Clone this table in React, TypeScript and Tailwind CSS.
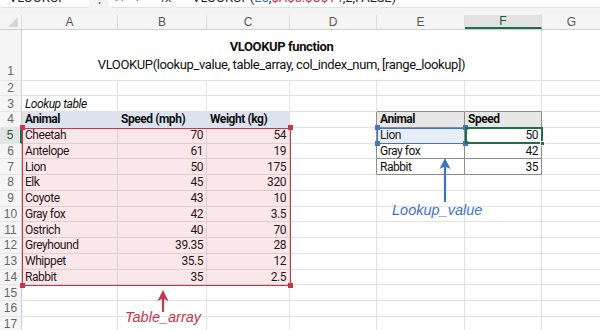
import React from 'react';

const animals: [string, string, string][] = [
  ['Cheetah', '70', '54'],
  ['Antelope', '61', '19'],
  ['Lion', '50', '175'],
  ['Elk', '45', '320'],
  ['Coyote', '43', '10'],
  ['Gray fox', '42', '3.5'],
  ['Ostrich', '40', '70'],
  ['Greyhound', '39.35', '28'],
  ['Whippet', '35.5', '12'],
  ['Rabbit', '35', '2.5'],
];

const lookup: Record<number, [string, string]> = {
  5: ['Lion', '50'],
  6: ['Gray fox', '42'],
  7: ['Rabbit', '35'],
};

// widths of row header, A..G
const widths = ['w-[22px]', 'w-[96px]', 'w-[89px]', 'w-[83px]', 'w-[87px]', 'w-[88px]', 'w-[77px]', 'w-[60px]'];

const FormulaBar = () => (
  <div className="h-[8px] overflow-hidden flex items-end bg-[#f3f3f3]">
    <div className="h-[22px] shrink-0 w-full flex items-end text-[13px] text-[#242424]">
      <div className="w-[89px] h-[20px] bg-white rounded-b-[3px] border-b border-[#e0e0e0] flex items-center justify-between pl-[9px] pr-[2px]">
        <span>VLOOKUP</span>
        <svg width="8" height="8" viewBox="0 0 8 8" className="text-[#555]">
          <path d="M1 2.5 L4 5.5 L7 2.5" fill="none" stroke="currentColor" strokeWidth="1.1" />
        </svg>
      </div>
      <div className="w-[20px] h-[20px] flex items-center justify-center text-[#666]">⋮</div>
      <div className="w-[62px] h-[20px] bg-white rounded-b-[3px] border-b border-[#e0e0e0] flex items-center gap-[9px] pl-[5px]">
        <span className="text-[#c4314b]">✕</span>
        <span className="text-[#107c41]">✓</span>
        <span className="italic text-[#444] ml-[7px]">fx</span>
      </div>
      <div className="flex-1 ml-[3px] h-[20px] bg-white rounded-bl-[3px] border-b border-[#e0e0e0] flex items-center pl-[11px]">
        <span>=VLOOKUP(</span>
        <span className="text-[#2f6fd6]">E5</span>
        <span>,</span>
        <span className="text-[#c4314b]">$A$5:$C$14</span>
        <span>,2,FALSE)</span>
      </div>
    </div>
  </div>
);

const ColumnHeader = () => (
  <div className="flex h-[15px] bg-[#f5f5f5] border-b border-[#cfcfcf] text-[12px] text-[#555] font-['Liberation_Sans',Roboto,sans-serif]">
    <div className={`${widths[0]} shrink-0 border-r border-[#dcdcdc] relative`}>
      <svg width="10" height="10" viewBox="0 0 10 10" className="absolute right-[3px] bottom-[2px]">
        <path d="M10 0 L10 10 L0 10 Z" fill="#d6d6d6" />
      </svg>
    </div>
    {['A', 'B', 'C', 'D', 'E', 'F', 'G'].map((c, i) => (
      <div
        key={c}
        className={`${widths[i + 1]} shrink-0 flex items-center justify-center border-r border-[#dcdcdc] ${
          c === 'F' ? 'bg-[#e3e3e3] border-b-2 border-b-[#1e7145] text-[#1e5a38]' : ''
        }`}
      >
        {c}
      </div>
    ))}
  </div>
);

const RowHeader = ({ n, tall }: { n: number; tall?: boolean }) => (
  <div
    className={`${widths[0]} shrink-0 flex justify-center text-[12px] font-['Liberation_Sans',Roboto,sans-serif] border-b border-[#e6e6e6] ${
      tall ? 'items-end' : 'items-center'
    } ${n === 5 ? 'bg-[#e3e3e3] border-r-2 border-r-[#1e7145] text-[#1e5a38]' : 'bg-[#f5f5f5] border-r border-r-[#cfcfcf] text-[#666]'}`}
  >
    {n}
  </div>
);

const grid = 'border-[#e2e2e2]';
const dark = 'border-[#8c8c8c]';

function cellBorder(r: number, c: number) {
  const inRight = r >= 4 && r <= 7;
  if ((c === 5 || c === 6) && inRight) return `border-r border-b ${dark}`;
  if (c === 4 && inRight) return 'border-r border-b border-b-[#e2e2e2] border-r-[#8c8c8c]';
  if ((c === 5 || c === 6) && r === 3) return 'border-r border-b border-r-[#e2e2e2] border-b-[#8c8c8c]';
  if (r === 4 && c >= 1 && c <= 2) return 'border-r border-b border-[#dce3ee]';
  if (r === 4 && c === 3) return 'border-r border-b border-b-[#dce3ee] border-r-[#e2e2e2]';
  return `border-r border-b ${grid}`;
}

function cellContent(r: number, c: number): { text?: string; cls?: string } {
  if (r === 3 && c === 1) return { text: 'Lookup table', cls: 'italic' };
  if (r === 4 && c === 1) return { text: 'Animal', cls: 'font-bold' };
  if (r === 4 && c === 2) return { text: 'Speed (mph)', cls: 'font-bold' };
  if (r === 4 && c === 3) return { text: 'Weight (kg)', cls: 'font-bold' };
  if (r >= 5 && r <= 14 && c >= 1 && c <= 3) {
    const row = animals[r - 5];
    return { text: row[c - 1], cls: c === 1 ? '' : 'justify-end' };
  }
  if (r === 4 && c === 5) return { text: 'Animal', cls: 'font-bold' };
  if (r === 4 && c === 6) return { text: 'Speed', cls: 'font-bold' };
  if (lookup[r] && c === 5) return { text: lookup[r][0] };
  if (lookup[r] && c === 6) return { text: lookup[r][1], cls: 'justify-end' };
  return {};
}

function cellFill(r: number, c: number) {
  if (r === 4 && c >= 1 && c <= 3) return 'bg-[#dce3ee]';
  if (r === 4 && (c === 5 || c === 6)) return 'bg-[#e7e7e7]';
  return '';
}

const SheetRow = ({ r }: { r: number }) => (
  <div className="flex h-[15.75px]">
    <RowHeader n={r} />
    {[1, 2, 3, 4, 5, 6, 7].map((c) => {
      const { text, cls } = cellContent(r, c);
      return (
        <div
          key={c}
          className={`${widths[c]} shrink-0 flex items-center px-[3px] whitespace-nowrap leading-none text-[12px] tracking-[-0.45px] ${cellBorder(r, c)} ${cellFill(r, c)} ${cls ?? ''}`}
        >
          {text}
        </div>
      );
    })}
  </div>
);

const Handle = ({ className }: { className: string }) => (
  <div className={`absolute w-[5px] h-[5px] ${className}`} />
);

const Overlays = () => (
  <>
    {/* table_array reference */}
    <div className="absolute left-[22px] top-[127.75px] w-[268.5px] h-[158px] border-[1.5px] border-[#c9364b] bg-[#d63a50]/12 pointer-events-none">
      <Handle className="-left-[3.5px] -top-[3.5px] bg-[#c9364b]" />
      <Handle className="-right-[3.5px] -top-[3.5px] bg-[#c9364b]" />
      <Handle className="-left-[3.5px] -bottom-[3.5px] bg-[#c9364b]" />
      <Handle className="-right-[3.5px] -bottom-[3.5px] bg-[#c9364b]" />
    </div>
    {/* lookup_value reference */}
    <div className="absolute left-[377px] top-[127.75px] w-[88.5px] h-[16px] border-[1.5px] border-[#4472c4] bg-[#4472c4]/12">
      <Handle className="-left-[3.5px] -top-[3.5px] bg-[#4472c4]" />
      <Handle className="-right-[3.5px] -top-[3.5px] bg-[#4472c4]" />
      <Handle className="-left-[3.5px] -bottom-[3.5px] bg-[#4472c4]" />
      <Handle className="-right-[3.5px] -bottom-[3.5px] bg-[#4472c4]" />
    </div>
    {/* active cell F5 */}
    <div className="absolute left-[465px] top-[126.75px] w-[78px] h-[17.5px] border-2 border-[#1e7145]">
      <Handle className="-right-[4px] -bottom-[4px] bg-[#1e7145] border border-white" />
    </div>

    {/* blue arrow */}
    <svg width="14" height="48" viewBox="0 0 14 48" className="absolute left-[438px] top-[158px]">
      <line x1="7" y1="8" x2="7" y2="44" stroke="#3e73c9" strokeWidth="2.2" />
      <polygon points="7,0 1.5,11 7,8.5 12.5,11" fill="#3e73c9" />
    </svg>
    <div className="absolute left-[392px] top-[201px] text-[14.5px] italic text-[#3e73c9] font-['Liberation_Sans',Roboto,sans-serif] leading-[18px]">
      Lookup_value
    </div>

    {/* red arrow */}
    <svg width="14" height="24" viewBox="0 0 14 24" className="absolute left-[156px] top-[290px]">
      <line x1="7" y1="8" x2="7" y2="22" stroke="#c23a50" strokeWidth="2.2" />
      <polygon points="7,0 1.5,11 7,8.5 12.5,11" fill="#c23a50" />
    </svg>
    <div className="absolute left-[125px] top-[308px] text-[14.5px] italic text-[#c23a50] font-['Liberation_Sans',Roboto,sans-serif] leading-[18px]">
      Table_array
    </div>
  </>
);

export default function App() {
  return (
    <div className="relative w-[600px] h-[330px] overflow-hidden bg-white text-[#111] font-['Roboto',sans-serif]">
      <FormulaBar />
      <div className="h-[7px] bg-[#f3f3f3]" />
      <ColumnHeader />

      {/* row 1: merged title A1:F1 */}
      <div className="flex h-[50.5px]">
        <RowHeader n={1} tall />
        <div className="w-[520px] shrink-0 flex flex-col items-center justify-end pb-[6px] border-r border-b border-[#e2e2e2] leading-[18px]">
          <div className="font-bold text-[13px] tracking-[-0.4px]">VLOOKUP function</div>
          <div className="text-[13px] tracking-[-0.38px]">VLOOKUP(lookup_value, table_array, col_index_num, [range_lookup])</div>
        </div>
        <div className={`${widths[7]} shrink-0 border-b border-[#e2e2e2]`} />
      </div>

      {Array.from({ length: 16 }, (_, i) => i + 2).map((r) => (
        <SheetRow key={r} r={r} />
      ))}

      <Overlays />
    </div>
  );
}
